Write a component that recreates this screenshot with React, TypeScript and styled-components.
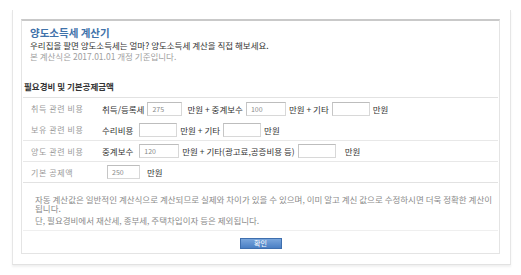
import React from "react";
import styled, { createGlobalStyle } from "styled-components";

const Global = createGlobalStyle`
  html, body { margin: 0; padding: 0; background: #fff; }
  body { font-family: "Noto Sans CJK KR", "Noto Sans", sans-serif; }
  * { box-sizing: border-box; }
`;

const Page = styled.div`
  width: 521px;
  height: 275px;
  padding: 10px 0 0 12px;
`;

const Popup = styled.div`
  width: 499px;
  height: 255px;
  border-left: 1px solid #e6e6e6;
  border-right: 1px solid #e6e6e6;
  border-bottom: 1px solid #e2e2e2;
  box-shadow: 0 2px 2px rgba(0, 0, 0, 0.06);
  padding: 9px 10px 0 8px;
`;

const Box = styled.div`
  width: 479px;
  height: 235px;
  border: 1px solid #e4e4e4;
  border-top: 2px solid #c9c9c9;
  display: flex;
  flex-direction: column;
`;

const Intro = styled.div`
  padding: 5px 0 0 8px;
  height: 60px;
`;

const Title = styled.div`
  color: #3f72aa;
  font-size: 10.5px;
  font-weight: 700;
  line-height: 13px;
`;

const Lead = styled.div`
  color: #333;
  font-size: 8.5px;
  line-height: 11px;
  margin-top: 1px;
`;

const Sub = styled.div`
  color: #a0a0a0;
  font-size: 8.5px;
  line-height: 11px;
`;

const Section = styled.div`
  padding: 0 1px;
`;

const SectionTitle = styled.div`
  color: #333;
  font-size: 8.5px;
  font-weight: 700;
  line-height: 10px;
  padding: 0 0 6px 1px;
  height: 16px;
  display: flex;
  align-items: center;
`;

const Table = styled.div`
  border-top: 1px solid #e2e2e2;
  border-bottom: 1px solid #e2e2e2;
`;

const Row = styled.div<{ $line?: boolean }>`
  height: 21px;
  display: flex;
  align-items: center;
  border-top: ${(p) => (p.$line ? "1px solid #e8e8e8" : "none")};
`;

const Label = styled.div`
  width: 77px;
  padding-left: 8px;
  color: #9a9a9a;
  font-size: 8px;
  letter-spacing: 0.6px;
`;

const Cell = styled.div`
  display: flex;
  align-items: center;
  font-size: 8.5px;
  color: #333;
  white-space: nowrap;
`;

const Text = styled.span<{ $ml?: number }>`
  margin: 0 3px 0 ${(p) => p.$ml ?? 3}px;
`;

const Field = styled.div<{ $w?: number; $ml?: number }>`
  width: ${(p) => p.$w ?? 37}px;
  height: 14px;
  border: 1px solid #d8d8d8;
  border-top-color: #bdbdbd;
  border-left-color: #c6c6c6;
  background: #fff;
  color: #8a8a8a;
  font-size: 7px;
  line-height: 12px;
  padding-left: 4px;
  margin-left: ${(p) => p.$ml ?? 0}px;
`;

const Notes = styled.div`
  padding: 12px 0 0 12px;
  color: #8a8a8a;
  font-size: 8.5px;
  line-height: 9px;
  height: 48px;
  border-bottom: 1px solid #efefef;
  margin: 0 1px;
`;

const Note = styled.p<{ $mt?: number }>`
  margin: ${(p) => p.$mt ?? 0}px 0 0 0;
  width: 462px;
`;

const Footer = styled.div`
  flex: 1;
  display: flex;
  justify-content: center;
  padding-top: 7px;
`;

const Button = styled.button`
  width: 42px;
  height: 11px;
  padding: 0;
  border: 1px solid #3f6fae;
  background: linear-gradient(#7aa6dc, #4a7fc4);
  color: #fff;
  font-family: inherit;
  font-size: 7px;
  line-height: 9px;
  cursor: pointer;
`;

export default function App() {
  return (
    <>
      <Global />
      <Page>
        <Popup>
          <Box>
            <Intro>
              <Title>양도소득세 계산기</Title>
              <Lead>우리집을 팔면 양도소득세는 얼마? 양도소득세 계산을 직접 해보세요.</Lead>
              <Sub>본 계산식은 2017.01.01 개정 기준입니다.</Sub>
            </Intro>
            <Section>
              <SectionTitle>필요경비 및 기본공제금액</SectionTitle>
              <Table>
                <Row>
                  <Label>취득 관련 비용</Label>
                  <Cell>
                    <Text $ml={2}>취득/등록세</Text>
                    <Field $w={35}>275</Field>
                    <Text $ml={5}>만원 + 중계보수</Text>
                    <Field $w={40}>100</Field>
                    <Text>만원 + 기타</Text>
                    <Field $w={38} />
                    <Text>만원</Text>
                  </Cell>
                </Row>
                <Row>
                  <Label>보유 관련 비용</Label>
                  <Cell>
                    <Text $ml={2}>수리비용</Text>
                    <Field $w={38} $ml={3} />
                    <Text>만원 + 기타</Text>
                    <Field $w={38} $ml={0} />
                    <Text>만원</Text>
                  </Cell>
                </Row>
                <Row $line>
                  <Label>양도 관련 비용</Label>
                  <Cell>
                    <Text $ml={2}>중계보수</Text>
                    <Field $w={40} $ml={3}>120</Field>
                    <Text>만원 + 기타(광고료,공증비용 등)</Text>
                    <Field $w={38} />
                    <Text $ml={9}>만원</Text>
                  </Cell>
                </Row>
                <Row $line>
                  <Label>기본 공제액</Label>
                  <Cell>
                    <Field $w={33} $ml={7}>250</Field>
                    <Text $ml={7}>만원</Text>
                  </Cell>
                </Row>
              </Table>
            </Section>
            <Notes>
              <Note>
                자동 계산값은 일반적인 계산식으로 계산되므로 실제와 차이가 있을 수 있으며, 이미 알고 계신 값으로 수정하시면 더욱 정확한 계산이 됩니다.
              </Note>
              <Note $mt={3}>단, 필요경비에서 재산세, 종부세, 주택차입이자 등은 제외됩니다.</Note>
            </Notes>
            <Footer>
              <Button>확인</Button>
            </Footer>
          </Box>
        </Popup>
      </Page>
    </>
  );
}
